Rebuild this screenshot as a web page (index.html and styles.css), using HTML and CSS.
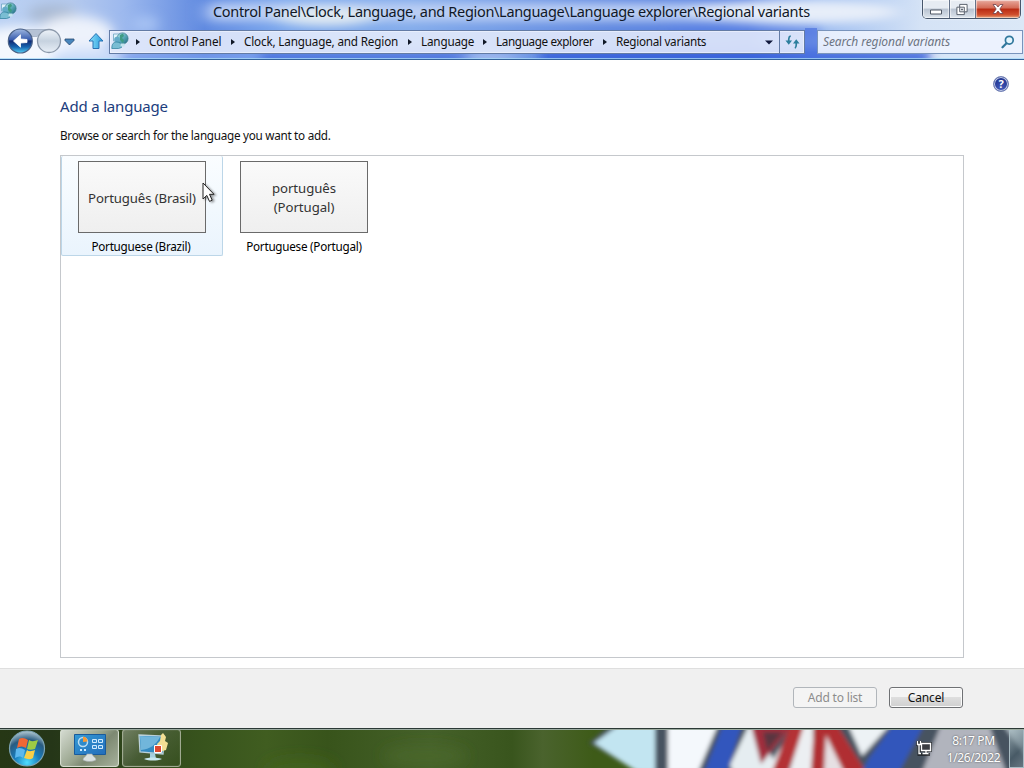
FILE: index.html
```html
<!DOCTYPE html>
<html lang="en">
<head>
<meta charset="utf-8">
<title>Regional variants</title>
<link rel="stylesheet" href="styles.css">
</head>
<body>
<svg class="defs" width="0" height="0" aria-hidden="true">
  <defs>
    <linearGradient id="teal" x1="0" y1="0" x2="1" y2="1"><stop offset="0" stop-color="#b8e9ee"/><stop offset=".5" stop-color="#5cabb9"/><stop offset="1" stop-color="#1d697f"/></linearGradient>
    <symbol id="region" viewBox="0 0 18 18">
      <path d="M2.500 2h7v7h-7z" fill="#e2f3fb" stroke="#6da5c2" stroke-width=".8"/>
      <circle cx="11.500" cy="6.500" r="5.600" fill="url(#teal)" stroke="#38788b" stroke-width=".7"/>
      <path d="M9 3l3-1.500 1 2.500-2 2 2 2-1 3-3-3z" fill="#3f9b83"/>
      <circle cx="6" cy="7.500" r="2.800" fill="#63abc8"/>
      <path d="M.8 16.500c0-5 2-6.500 5-6.500 3.500 0 4.700 2 4.700 5.500l-3 1z" fill="#79bdd3" stroke="#287b99" stroke-width=".7"/>
      <path d="M9.500 11.500h4v3h-4z" fill="#c3e5ed"/>
    </symbol>
  </defs>
</svg>
<div class="window">
  <header class="frame">
    <svg class="glass" viewBox="0 0 1024 60" preserveAspectRatio="none" aria-hidden="true">
      <defs>
        <linearGradient id="sky" x1="0" x2="1" y1="0" y2="0">
          <stop offset="0" stop-color="#b9d0f3"/><stop offset=".07" stop-color="#b5caee"/><stop offset=".12" stop-color="#9db9ee"/><stop offset=".2" stop-color="#5f89e0"/><stop offset=".28" stop-color="#7da9ee"/><stop offset=".4" stop-color="#83aceb"/><stop offset=".6" stop-color="#6088e0"/><stop offset=".73" stop-color="#547de0"/><stop offset=".8" stop-color="#9cbcf0"/><stop offset=".9" stop-color="#d5e3f6"/><stop offset="1" stop-color="#dbe8f7"/>
        </linearGradient>
        <filter id="b4" x="-50%" y="-50%" width="200%" height="200%"><feGaussianBlur stdDeviation="6"/></filter>
        <filter id="b8" x="-50%" y="-100%" width="200%" height="300%"><feGaussianBlur stdDeviation="9 5"/></filter>
      </defs>
      <rect width="1024" height="60" fill="url(#sky)"/>
      <g filter="url(#b4)">
        <ellipse cx="52" cy="14" rx="24" ry="9" fill="#a9b9d2"/>
        <ellipse cx="76" cy="34" rx="38" ry="18" fill="#edf2fb"/>
        <ellipse cx="20" cy="48" rx="50" ry="22" fill="#f4f8fe"/>
        <ellipse cx="90" cy="56" rx="40" ry="8" fill="#cfdffa"/>
        <ellipse cx="145" cy="24" rx="14" ry="7" fill="#a9c4f4"/>
        <path d="M120 54h340v12H120z" fill="#7a9eed"/>
        <path d="M260 52h210v13H260z" fill="#456cdb"/>
        <path d="M540 50h390v14H540z" fill="#365dda"/>
        <path d="M670 25h150v8H670z" fill="#5a80e5"/>
        <path d="M940 46h90v20H940z" fill="#d7e6f8"/>
      </g>
      <g filter="url(#b8)">
        <path d="M207 3h610v18H207z" fill="#bccff4"/>
        <ellipse cx="325" cy="16" rx="52" ry="10" fill="#dfe9f2"/>
        <ellipse cx="795" cy="12" rx="105" ry="12" fill="#e7eef9"/>
        <ellipse cx="490" cy="58" rx="30" ry="4" fill="#b3c4f0"/>
      </g>
      <path d="M805 28h12v31h-12z" fill="#4a70df" opacity=".65"/>
      <path d="M0 58.500h1024" stroke="#a9dcf8" opacity=".75"/>
    </svg>
    <div class="titlebar">
      <svg class="title-icon" viewBox="0 0 18 18"><use href="#region"/></svg>
      <h1 class="title">Control Panel\Clock, Language, and Region\Language\Language explorer\Regional variants</h1>
      <div class="captions">
        <span class="cap cap-min"><svg viewBox="0 0 14 12"><path d="M1.500 6.500h11v4h-11z" fill="#fff" stroke="#515965"/></svg></span>
        <span class="cap cap-max"><svg viewBox="0 0 14 14"><path d="M4.500 1.500h8v8h-3v3h-8v-8h3z" fill="#fff" stroke="#515965"/><path d="M4.500 9.500h5v-5h-5zM6.500 6.500h1v1h-1z" fill="#eef1f5" stroke="#515965"/></svg></span>
        <span class="cap cap-close"><svg viewBox="0 0 14 12"><path d="M2 1h3l2 2.500L9 1h3L8.800 5.500 12 10H9L7 7.500 5 10H2l3.200-4.500z" fill="#fff" stroke="#70404a" stroke-width=".8"/></svg></span>
      </div>
    </div>
    <div class="navbar">
      <svg class="travel" viewBox="0 0 108 32">
        <defs>
          <linearGradient id="back" x1="0" y1="0" x2="0" y2="1"><stop offset="0" stop-color="#9fb7e0"/><stop offset=".45" stop-color="#385cad"/><stop offset=".5" stop-color="#112a73"/><stop offset=".75" stop-color="#1664af"/><stop offset="1" stop-color="#57d2f8"/></linearGradient>
          <linearGradient id="fwd" x1="0" y1="0" x2="0" y2="1"><stop offset="0" stop-color="#eef3f9"/><stop offset=".5" stop-color="#c6d2df"/><stop offset="1" stop-color="#e8eff7"/></linearGradient>
          <linearGradient id="up" x1="0" x2="1" y1="0" y2="0"><stop offset="0" stop-color="#8ee2fb"/><stop offset="1" stop-color="#279bdc"/></linearGradient>
        </defs>
        <path d="M20 4.500h29q-8 3-12 7h-5q-4-5-12-7z" fill="#b5c2d5" stroke="#8f9db3" stroke-width=".6"/>
        <circle cx="20.300" cy="16" r="12" fill="url(#back)" stroke="#4b6288" stroke-width="1.200"/>
        <path d="M13.500 16l7-6.200v4.200l6.500.5v3l-6.500.5v4.200z" fill="#fff" stroke="#fff" stroke-width=".8" stroke-linejoin="round"/>
        <circle cx="49" cy="16" r="11.500" fill="url(#fwd)" stroke="#8b98aa" stroke-width="1.300"/>
        <path d="M65 14h9v1.500L69.500 20 65 15.500z" fill="#4886bd" stroke="#24466f" stroke-width=".8"/>
        <path d="M96 8.500l7 7.500h-4v7.500h-6V16h-4z" fill="url(#up)" stroke="#2873b5"/>
      </svg>
      <div class="address">
        <svg class="address-icon" viewBox="0 0 18 18"><use href="#region"/></svg>
        <ol class="crumbs">
          <li class="crumb crumb-root">Control Panel</li>
          <li class="crumb crumb-region">Clock, Language, and Region</li>
          <li class="crumb crumb-language">Language</li>
          <li class="crumb crumb-explorer">Language explorer</li>
          <li class="crumb crumb-variants">Regional variants</li>
        </ol>
        <svg class="drop" viewBox="0 0 8 5"><path d="M0 .5h8L4 4.500z" fill="#10183c"/></svg>
        <span class="refresh"><svg viewBox="0 0 16 14"><path d="M6 .5C4.500 1 4 2 4 4v3M10.500 13.500C12 13 12 12 12 10V7" fill="none" stroke="#2d7f9d" stroke-width="1.800"/><path d="M.5 5.500h7L4 10zM8.500 8.500h7L12 4z" fill="#2d7f9d"/></svg></span>
      </div>
      <div class="search">
        <span class="search-hint">Search regional variants</span>
        <svg class="search-icon" viewBox="0 0 14 14"><circle cx="8.300" cy="5.200" r="3.900" fill="#e5f5fd" stroke="#31789d" stroke-width="1.700"/><path d="M5.500 8.200L1.500 12.300" stroke="#31789d" stroke-width="2.200" stroke-linecap="round"/></svg>
      </div>
    </div>
  </header>
  <main class="content">
    <span class="help">?</span>
    <h2 class="heading">Add a language</h2>
    <p class="intro">Browse or search for the language you want to add.</p>
    <div class="list">
      <div class="tile tile-hot">
        <div class="preview preview-brazil">Português (Brasil)</div>
        <span class="name">Portuguese (Brazil)</span>
      </div>
      <div class="tile">
        <div class="preview">português<br>(Portugal)</div>
        <span class="name">Portuguese (Portugal)</span>
      </div>
    </div>
  </main>
  <footer class="actions">
    <button class="btn" disabled>Add to list</button>
    <button class="btn btn-cancel">Cancel</button>
  </footer>
</div>
<div class="taskbar">
  <svg class="wallpaper" viewBox="0 0 1024 40" preserveAspectRatio="none" aria-hidden="true">
    <defs>
      <linearGradient id="grass" x1="0" x2="1" y1="0" y2="0"><stop offset="0" stop-color="#263715"/><stop offset=".05" stop-color="#253618"/><stop offset=".2" stop-color="#38541d"/><stop offset=".26" stop-color="#405d20"/><stop offset=".32" stop-color="#38541b"/><stop offset=".42" stop-color="#456129"/><stop offset=".5" stop-color="#39551d"/><stop offset=".53" stop-color="#4a632d"/><stop offset=".58" stop-color="#3e5b18"/></linearGradient>
      <filter id="soft" x="-5%" y="-20%" width="110%" height="140%"><feGaussianBlur stdDeviation="2"/></filter>
      <filter id="haze" x="-30%" y="-60%" width="160%" height="220%"><feGaussianBlur stdDeviation="7"/></filter>
    </defs>
    <rect width="1024" height="40" fill="url(#grass)"/>
    <g filter="url(#haze)">
      <ellipse cx="300" cy="42" rx="35" ry="12" fill="#45651e" opacity=".7"/>
      <ellipse cx="425" cy="28" rx="42" ry="10" fill="#4b682b" opacity=".8"/>
    </g>
    <g filter="url(#soft)">
      <path d="M589 15L610-3h440v50H650l-22-9z" fill="#475361"/>
      <path d="M594 15L619-3h36v47h-18z" fill="#c2e5f1"/>
      <path d="M668-3h50l-20 47h-30z" fill="#f4f8fc"/>
      <path d="M723-3h19l-15 47h-23z" fill="#3157bd"/>
      <path d="M749-3h8l22 47h-46l-3-7z" fill="#e5edf1"/>
      <path d="M751-3h41l-31 39z" fill="#a12e3c"/>
      <path d="M763 4h20l-16 19z" fill="#5a3540"/>
      <path d="M795-3h13l-26 47h-17z" fill="#e9eef1"/>
      <path d="M790-3h16l-18 47h-16z" fill="#b43335"/>
      <path d="M804-3h9v47h-24z" fill="#eceff2"/>
      <path d="M814-3h23l29 47h-55z" fill="#b02f33"/>
      <path d="M826 7l18 37h-20z" fill="#e6e0e3"/>
      <path d="M848-3h42l-28 31z" fill="#edf2f5"/>
      <path d="M893-3h31l-25 47h-37l7-14z" fill="#3157bb"/>
      <path d="M941-3h48l17 47h-84z" fill="#b1b4bd"/>
      <path d="M1003-3h30v40z" fill="#aab7c0"/>
    </g>
  </svg>
  <svg class="start" viewBox="0 0 60 40">
    <defs><radialGradient id="orb" cx=".5" cy=".9" r=".9"><stop offset="0" stop-color="#50ddff"/><stop offset=".4" stop-color="#187cbc"/><stop offset=".72" stop-color="#295b80"/><stop offset="1" stop-color="#b4cad4"/></radialGradient></defs>
    <circle cx="27" cy="20.500" r="17.500" fill="url(#orb)" stroke="#7ca4b3" stroke-width="1.200"/>
    <path d="M19 11c3-2 6-1 9 1l-2 8c-3-2-6-2-9 0z" fill="#ef6835"/>
    <path d="M29 12c3 2 6 1 9 0l-3 9c-3 1-6 1-8 0z" fill="#9ecb45"/>
    <path d="M16 21c3-2 6-1 9 1l-2 8c-2-2-5-2-8 0z" fill="#5db8ee"/>
    <path d="M27 22c2 2 5 1 8 0l-2 8c-3 2-6 1-9 0z" fill="#f9cf48"/>
  </svg>
  <div class="task task-active">
    <svg viewBox="0 0 36 30"><defs><linearGradient id="panel" x1="0" y1="0" x2="1" y2="1"><stop offset="0" stop-color="#349ad5"/><stop offset="1" stop-color="#236dba"/></linearGradient></defs><path d="M2.500 1.500h31v20h-31z" fill="url(#panel)" stroke="#195b9c"/><circle cx="11" cy="9" r="4.500" fill="none" stroke="#b9dcf3" stroke-width="1.500"/><path d="M11 9V3.500a5 5 0 0 1 4.500 5z" fill="#f69936"/><path d="M20.500 6.500h4v3h-4zM26.500 6.500h4v3h-4zM20.500 12.500h4v3h-4zM26.500 12.500h4v3h-4z" fill="#348bd0" stroke="#cfeaff"/><path d="M8 17h2M12 17h2" stroke="#cfeaff" stroke-width="2"/><path d="M11 27c0-3 3-3 4-6h5c1 3 4 3 4 6-4 2-9 2-13 0z" fill="#d9e0df" stroke="#9da6a8" stroke-width=".6"/></svg>
  </div>
  <div class="task">
    <svg viewBox="0 0 36 30"><path d="M5 2l25 1-1 18-23-2z" fill="#348bc1" stroke="#bad1da" stroke-width="1.300"/><path d="M6 3l20 1C22 12 16 16 7 17z" fill="#8cc9e6" opacity=".7"/><path d="M16 20l5 .5 1 5h-6z" fill="#a5cfde"/><path d="M10 26c5-2 12-2 18 0-5 2-13 2-18 0z" fill="#c8e8ee"/><path d="M27 2l2-2 3 4-1 4 3 2-2 7-7 2-2-8 3-3z" fill="#f3df94"/><path d="M20.500 12.500h7v7h-7z" fill="#dd4930" stroke="#fff"/></svg>
  </div>
  <div class="tray">
    <svg class="network" viewBox="0 0 16 16"><path d="M5.500 3.500h9v7h-9zM10 11v3M6 14.500h8M1.500 1v3.500h3V1M3 5v9.500h3" fill="none" stroke="#111" stroke-width="3" opacity=".6"/><path d="M5.500 3.500h9v7h-9z" fill="#3b3d42" stroke="#fff" stroke-width="1.300"/><path d="M10 11v3M6.500 13.500h6M1.500 1v3.500h3V1M3 5v8.500h2" fill="none" stroke="#fff" stroke-width="1.300"/></svg>
    <div class="clock"><span class="time">8:17 PM</span><span class="date">1/26/2022</span></div>
    <span class="show-desktop"></span>
  </div>
</div>
<svg class="pointer" viewBox="0 0 13 21"><path d="M1 1v16l3.800-3.600 2.700 6 2.700-1.200-2.700-5.900H12z" fill="#fff" stroke="#222" stroke-width="1"/></svg>
</body>
</html>
```

FILE: styles.css
```css
* { box-sizing: border-box; }
body { margin: 0; width: 1024px; height: 768px; overflow: hidden; position: relative; font: 11.7px/16px "Noto Sans", "Open Sans", sans-serif; color: #111; background: #fff; }
h1, h2, p, ol { margin: 0; padding: 0; font-weight: 400; }
svg { display: block; flex: none; }
.defs { position: absolute; }
.window { display: flex; flex-direction: column; height: 728px; }

.frame { position: relative; height: 60px; border-bottom: 1px solid #33639c; overflow: hidden; }
.glass { position: absolute; inset: 0; width: 1024px; height: 60px; }
.titlebar { position: relative; display: flex; height: 25px; }
.title-icon { width: 18px; height: 18px; margin: 2px 0 0 -1px; }
.title { flex: 1; padding-left: 196px; font-size: 14.5px; line-height: 23px; letter-spacing: -.32px; white-space: nowrap; color: #101827; }
.captions { display: flex; width: 99px; height: 19px; margin-right: 3px; border: 1px solid #48576c; border-top: 0; border-radius: 0 0 5px 5px; overflow: hidden; box-shadow: 0 0 2px #fff; }
.cap { display: flex; justify-content: center; align-items: center; border-right: 1px solid #65738a; background: linear-gradient(#e6ebf2 0 45%, #b8c2d0 50%, #dce4ec); box-shadow: inset 0 0 1px 1px #ffffff90; }
.cap svg { width: 14px; height: 13px; }
.cap-min { width: 27px; }
.cap-max { width: 26px; padding-right: 2px; }
.cap-close { flex: 1; border: 0; background: linear-gradient(#e8aa9e, #d36a55 45%, #b92b13 50%, #cf4d2c 80%, #e69668); }

.navbar { position: relative; display: flex; height: 34px; }
.travel { width: 108px; height: 32px; }
.address { display: flex; align-items: center; width: 696px; height: 24px; margin: 5px 12px 0 1px; border: 1px solid #637ba5; background: #e7edfbdd; box-shadow: inset 0 0 0 1px #f7faff80; }
.address-icon { width: 18px; height: 18px; margin: 0 -1px 2px 1px; }
.crumbs { display: flex; flex: 1; list-style: none; line-height: 15px; padding-bottom: 2px; }
.crumb { display: flex; align-items: center; white-space: nowrap; flex: none; letter-spacing: -.17px; }
.crumb::before { content: ""; width: 0; margin: 1px 9px 0 8px; border: solid transparent; border-width: 3.5px 0 3.5px 4px; border-left-color: #101827; }
.crumb-root { width: 95px; letter-spacing: -.14px; }
.crumb-region { width: 177px; }
.crumb-language { width: 75px; }
.crumb-explorer { width: 120px; letter-spacing: -.36px; }
.crumb-variants { letter-spacing: -.28px; }
.drop { width: 8px; height: 5px; margin-right: 6px; }
.refresh { display: flex; align-items: center; justify-content: center; width: 25px; height: 22px; border-left: 1px solid #637ba5; }
.refresh svg { width: 15px; height: 14px; }
.search { display: flex; align-items: center; justify-content: space-between; width: 206px; height: 24px; margin-top: 5px; padding: 0 7px 0 5px; border: 1px solid #7994bc; background: #edf3fee8; }
.search-hint { font-size: 12px; font-style: italic; color: #6c7482; letter-spacing: -.1px; line-height: 15px; padding-bottom: 2px; white-space: nowrap; }
.search-icon { width: 14px; height: 14px; }

.content { position: relative; flex: 1; padding: 35px 60px 0; background: #fff; }
.help { position: absolute; left: 993px; top: 16px; width: 16px; height: 16px; border: 1px solid #7180b4; border-radius: 50%; background: radial-gradient(circle at 50% 80%, #4158b9, #172a83); box-shadow: inset 0 0 0 1px #c7cfe8; color: #fff; font: 700 11px/14px "Noto Sans", sans-serif; text-align: center; }
.heading { height: 24px; font-size: 15px; line-height: 23px; letter-spacing: -.18px; color: #1c3d7d; }
.intro { margin-top: 8px; height: 28px; letter-spacing: -.27px; }
.list { display: flex; align-items: flex-start; height: 503px; border: 1px solid #c5c8cc; }
.tile { display: flex; flex-direction: column; align-items: center; width: 162px; height: 100px; padding-top: 5px; border: 1px solid transparent; border-top: 0; }
.tile-hot { border-color: #bcd6e8; border-radius: 2px; background: linear-gradient(#fafdff, #eaf4fd); }
.preview { display: flex; align-items: center; justify-content: center; width: 128px; height: 72px; padding-top: 2px; border: 1px solid #6a6a6a; background: linear-gradient(#fafafa, #efefef); font-size: 13.200px; line-height: 19px; letter-spacing: -.05px; text-align: center; color: #333; }
.preview-brazil { letter-spacing: -.12px; white-space: nowrap; }
.name { margin-top: 5px; white-space: nowrap; letter-spacing: -.25px; color: #000; }
.tile-hot .name { margin-left: -2px; }

.actions { display: flex; justify-content: flex-end; gap: 12px; height: 60px; padding: 18px 61px 0 0; border-top: 1px solid #dfdfdf; background: #f0f0f0; }
.btn { width: 84px; height: 21px; padding: 0; border: 1px solid #b1b6bb; border-radius: 3px; background: #f4f4f4; color: #8d8d8d; font: 12px/17px "Noto Sans", sans-serif; letter-spacing: -.18px; }
.btn-cancel { width: 74px; border-color: #6f7174; background: linear-gradient(#f4f4f4 0 45%, #dedede 50%, #d0d0d0); box-shadow: inset 0 0 0 1px #fbfbfb; color: #111; }

.taskbar { position: relative; display: flex; height: 40px; overflow: hidden; }
.taskbar::before { content: ""; position: absolute; z-index: 1; inset: 0 0 auto; height: 2px; background: linear-gradient(#2c3936 50%, #9baba0 50%); }
.wallpaper { position: absolute; inset: 0; width: 1024px; height: 40px; }
.start { position: relative; width: 60px; height: 40px; }
.task { position: relative; display: flex; align-items: center; justify-content: center; width: 59px; height: 38px; margin: 1px 3px 0 0; border: 1px solid #a0aa91; border-radius: 3px; background: linear-gradient(135deg, #8f9a83b0, #64765470 45%, #39512360); box-shadow: inset 0 0 1px #ffffff90; }
.task-active { border-color: #d4dccd; background: linear-gradient(135deg, #d5dbd1 0, #9aa68f 45%, #7d8972 60%, #a6b19b); }
.task svg { width: 36px; height: 30px; }
.tray { position: relative; display: flex; align-items: center; margin-left: auto; color: #fff; }
.network { width: 16px; height: 16px; margin-right: 14px; }
.clock { display: flex; flex-direction: column; align-items: center; width: 55px; margin-top: 1px; font-size: 12px; line-height: 17px; text-shadow: 0 0 2px #444; white-space: nowrap; letter-spacing: -.4px; }
.show-desktop { width: 15px; height: 39px; margin: 1px 0 0 8px; border: 1px solid #a8bbc3; background: linear-gradient(135deg, #acc0c5b0, #49606b90 60%, #80929b90); }
.pointer { position: absolute; left: 202px; top: 182px; width: 13px; height: 21px; filter: drop-shadow(2px 1px 1px #0006); }
```
